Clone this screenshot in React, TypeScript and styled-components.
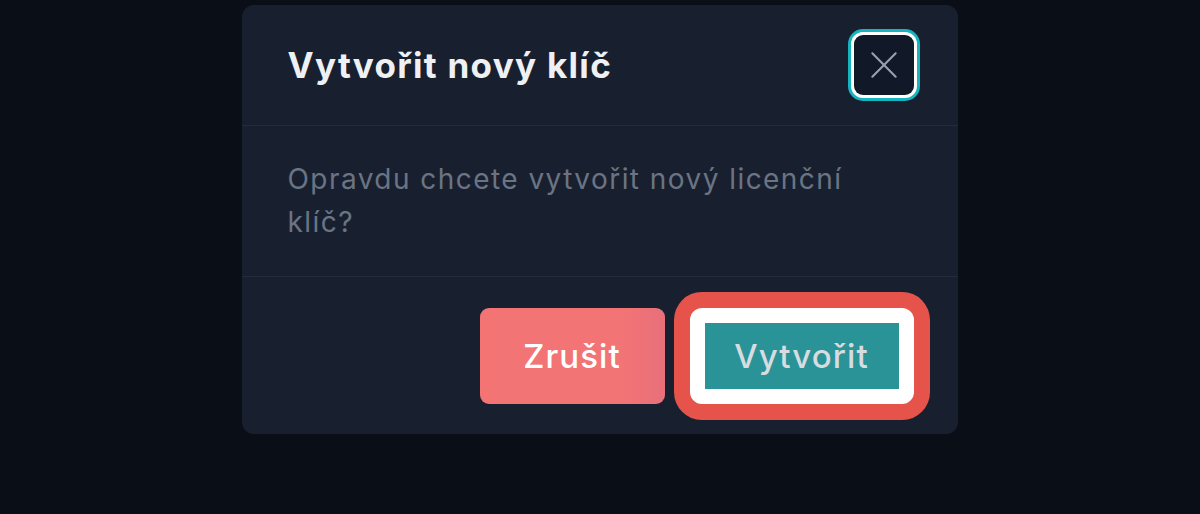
import React from 'react'
import styled, { createGlobalStyle } from 'styled-components'

// -------------------------------------------------------- //
//                       Main Component                     //
// -------------------------------------------------------- //

const App = () => (
  <>
    <GlobalStyle />
    <Backdrop>
      <Dialog role="dialog" aria-labelledby="dialog-title">
        <Header>
          <Title id="dialog-title">Vytvořit nový klíč</Title>
          <CloseButton aria-label="Zavřít">
            <CloseIcon />
          </CloseButton>
        </Header>
        <Body>
          <Message>Opravdu chcete vytvořit nový licenční klíč?</Message>
        </Body>
        <Footer>
          <Button variant="cancel">Zrušit</Button>
          <Button variant="confirm">Vytvořit</Button>
        </Footer>
      </Dialog>
    </Backdrop>
  </>
)

export default App

// -------------------------------------------------------- //
//                        Sub-Components                    //
// -------------------------------------------------------- //

const CloseIcon = () => (
  <svg width="40" height="40" viewBox="0 0 24 24" fill="none" stroke="currentColor" strokeWidth="1.25" strokeLinecap="round">
    <path d="M5 5 L19 19" />
    <path d="M19 5 L5 19" />
  </svg>
)

// -------------------------------------------------------- //
//                           Styles                         //
// -------------------------------------------------------- //

const GlobalStyle = createGlobalStyle`
  html, body {
    margin: 0;
    padding: 0;
    background: #0a0e17;
    font-family: Inter, "Noto Sans", sans-serif;
  }
`

const Backdrop = styled.div`
  width: 1200px;
  height: 514px;
  display: flex;
  justify-content: center;
  align-items: flex-start;
  padding-top: 5px;
  box-sizing: border-box;
  background: #0a0e17;
`

const Dialog = styled.div`
  width: 716px;
  margin-left: -1px;
  background: #182030;
  border-radius: 12px;
  display: flex;
  flex-direction: column;
`

const Header = styled.div`
  height: 120px;
  display: flex;
  align-items: center;
  justify-content: space-between;
  padding: 0 44px 0 46px;
  border-bottom: 1px solid #232b3b;
`

const Title = styled.h2`
  margin: 0;
  color: #eef0f3;
  font-size: 35px;
  font-weight: 700;
  letter-spacing: 1.3px;
`

const CloseButton = styled.button`
  width: 60px;
  height: 60px;
  display: flex;
  align-items: center;
  justify-content: center;
  padding: 0;
  background: #111827;
  color: #9aa1ac;
  border: none;
  border-radius: 9px;
  box-shadow: 0 0 0 3px #ffffff, 0 0 0 6px #17b3bf;
`

const Body = styled.div`
  padding: 32px 90px 32px 46px;
  border-bottom: 1px solid #232b3b;
`

const Message = styled.p`
  margin: 0;
  color: #6b7483;
  font-size: 28px;
  line-height: 43px;
  letter-spacing: 1.45px;
`

const Footer = styled.div`
  height: 157px;
  display: flex;
  align-items: center;
  justify-content: flex-end;
  gap: 25px;
  padding: 0 44px;
`

const Button = styled.button<{ variant: 'cancel' | 'confirm' }>`
  height: 96px;
  box-sizing: border-box;
  font-family: inherit;
  font-size: 33px;
  font-weight: 500;
  letter-spacing: 1.1px;
  cursor: pointer;
  ${p => p.variant === 'cancel' ? `
    width: 185px;
    color: #ffffff;
    border: none;
    border-radius: 9px;
    background: linear-gradient(90deg, #f47474 0%, #f37475 75%, #e8707a 100%);
  ` : `
    width: 224px;
    color: #d6dcdf;
    border: 15px solid #ffffff;
    border-radius: 12px;
    background: #2a9397;
    box-shadow: 0 0 0 16px #e5534b;
  `}
`
